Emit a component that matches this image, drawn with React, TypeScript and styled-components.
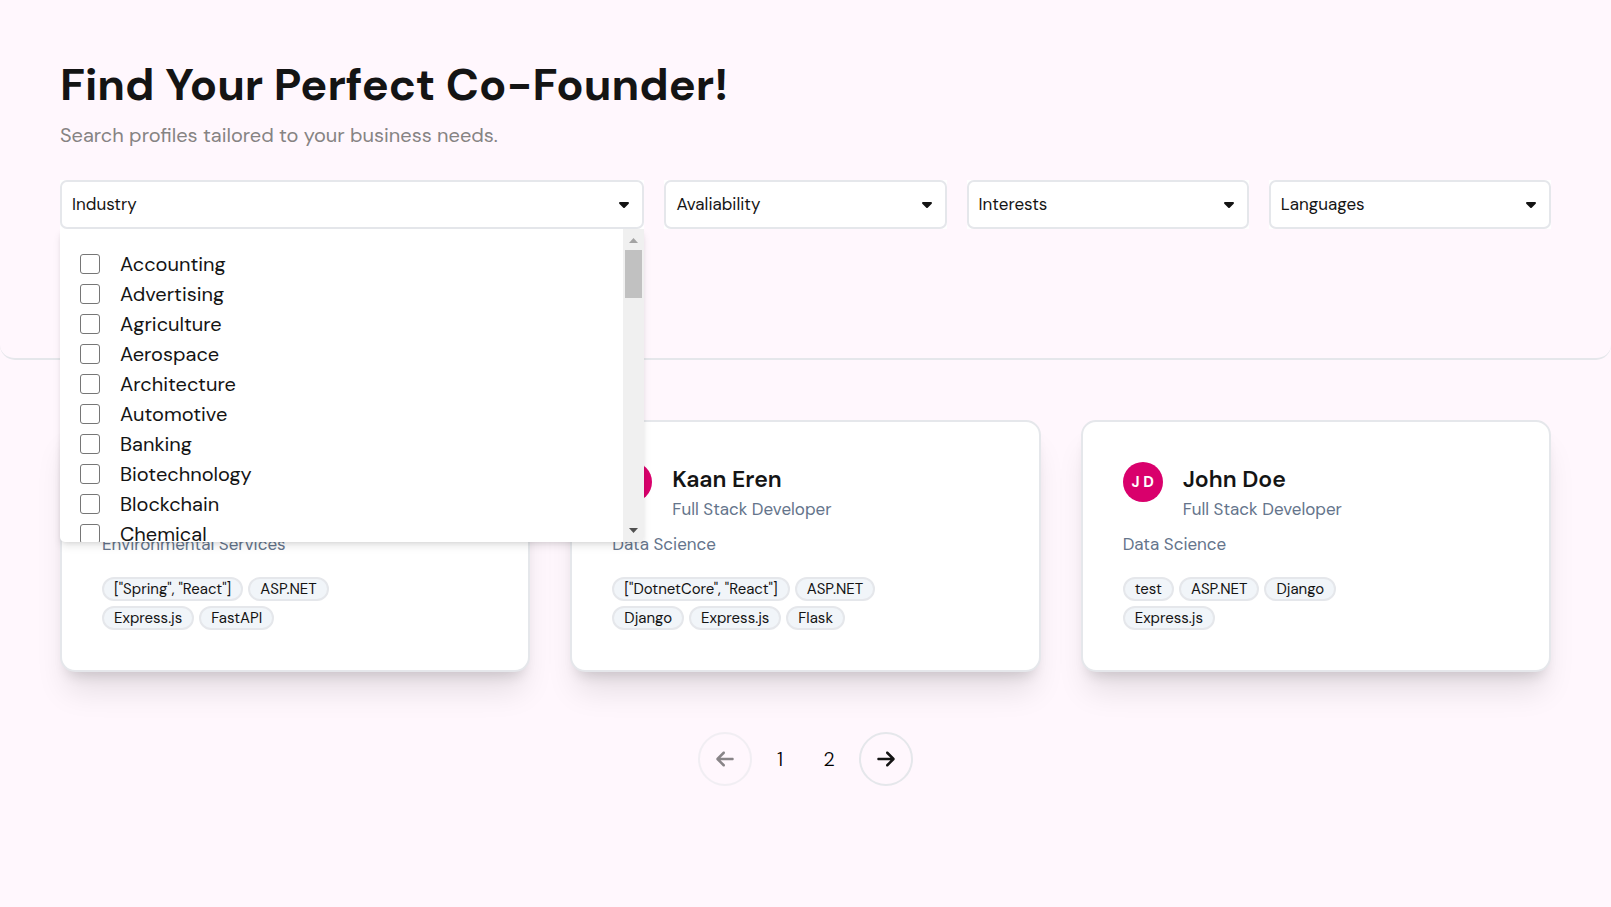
import React, { useState } from 'react';
import styled, { createGlobalStyle } from 'styled-components';
import { FaArrowLeft, FaArrowRight, FaCaretDown } from 'react-icons/fa6';

const GlobalStyle = createGlobalStyle`
  *, *::before, *::after { box-sizing: border-box; }
  body {
    margin: 0;
    background: #fff7fd;
    color: #141414;
    font-family: "DM Sans", Inter, "Liberation Sans", sans-serif;
    font-size: 20px;
    line-height: 30px;
  }
  h1, h2, p, ul { margin: 0; padding: 0; }
  ul { list-style: none; }
  button, select, input { font: inherit; color: inherit; margin: 0; }
`;

const Hero = styled.header`
  padding: 60px 60px 129px;
  border-bottom: 2px solid #e5e7eb;
  border-radius: 0 0 15px 15px;
`;

const Title = styled.h1`
  font-size: 45px;
  line-height: 50px;
  font-weight: 700;
`;

const Subtitle = styled.p`
  margin-top: 10px;
  color: #868383;
`;

const Filters = styled.form`
  display: grid;
  grid-template-columns: repeat(5, minmax(0, 1fr));
  gap: 20px;
  margin-top: 30px;
`;

const Filter = styled.div<{ $span?: number }>`
  position: relative;
  grid-column: span ${({ $span = 1 }) => $span};
  background: #fff;
`;

const fieldHeight = '49px';

const FilterButton = styled.button`
  display: flex;
  align-items: center;
  justify-content: space-between;
  width: 100%;
  height: ${fieldHeight};
  padding: 0 10px 2px;
  border: 2px solid #e5e7eb;
  border-radius: 7px;
  background: #fff;
  font-size: 17px;
  cursor: pointer;
`;

const FilterSelect = styled.select`
  display: block;
  appearance: none;
  width: 100%;
  height: ${fieldHeight};
  padding: 0 32px 2px 10px;
  border: 2px solid #e5e7eb;
  border-radius: 7px;
  background: #fff;
  font-size: 17px;
  cursor: pointer;
`;

const SelectCaret = styled.span`
  position: absolute;
  top: 0;
  bottom: 2px;
  right: 12px;
  display: flex;
  align-items: center;
  pointer-events: none;
`;

const Menu = styled.div`
  position: absolute;
  z-index: 10;
  top: 100%;
  left: 0;
  right: 0;
  display: flex;
  height: 313px;
  border-radius: 0 0 5px 5px;
  background: #fff;
  box-shadow: 0 5px 8px -1px rgb(0 0 0 / 10%), 0 2px 5px -2px rgb(0 0 0 / 10%);
  overflow: hidden;
`;

const OptionList = styled.ul`
  flex: 1;
  padding: 20px;
  overflow-y: auto;
  scrollbar-width: none;
`;

const Option = styled.label`
  display: flex;
  align-items: center;
  gap: 20px;
  height: 30px;
`;

const CheckBox = styled.input`
  width: 20px;
  height: 20px;
  appearance: none;
  border: 1px solid #767676;
  border-radius: 3px;
  background: #fff;
  &:checked { background: #d9006c; }
`;

const ScrollBar = styled.div`
  display: flex;
  flex-direction: column;
  align-items: center;
  justify-content: space-between;
  width: 21px;
  background: #f0f0f0;
`;

const ScrollArrow = styled.svg`
  width: 21px;
  height: 21px;
`;

const ScrollTrack = styled.div`
  flex: 1;
  width: 17px;
`;

const ScrollThumb = styled.div`
  height: 48px;
  background: #c1c1c1;
`;

const Results = styled.main`
  padding: 60px;
`;

const Cards = styled.div`
  display: grid;
  grid-template-columns: repeat(3, minmax(0, 1fr));
  gap: 40px;
`;

const Card = styled.article`
  padding: 40px;
  border: 2px solid #e5e7eb;
  border-radius: 15px;
  background: #fff;
  box-shadow: 0 25px 31px -6px rgb(0 0 0 / 10%), 0 10px 13px -7px rgb(0 0 0 / 14%);
`;

const Person = styled.div`
  display: flex;
  gap: 20px;
  min-height: 60px;
`;

const Avatar = styled.span`
  display: flex;
  align-items: center;
  justify-content: center;
  width: 40px;
  height: 40px;
  border-radius: 50%;
  background: #d9006c;
  color: #fff;
  font-size: 15px;
  font-weight: 700;
`;

const Name = styled.h2`
  font-size: 23px;
  line-height: 35px;
  font-weight: 600;
`;

const Muted = styled.p`
  color: #64748b;
  font-size: 17px;
  line-height: 25px;
`;

const Field = styled(Muted)`
  margin-top: 10px;
`;

const Tags = styled.ul`
  display: flex;
  flex-wrap: wrap;
  gap: 5px;
  width: 75%;
  margin-top: 20px;
`;

const Tag = styled.li`
  height: 24px;
  padding: 0 10px;
  border: 2px solid #e5e7eb;
  border-radius: 12px;
  background: #f1f5f9;
  font-size: 15px;
  line-height: 20px;
`;

const Pagination = styled.nav`
  display: flex;
  align-items: center;
  justify-content: center;
  gap: 9px;
  margin-top: 60px;
`;

const ArrowButton = styled.button`
  display: flex;
  align-items: center;
  justify-content: center;
  width: 54px;
  height: 54px;
  padding: 0;
  border: 2px solid #e5e7eb;
  border-radius: 50%;
  background: transparent;
  cursor: pointer;
  &:disabled { opacity: 0.5; cursor: default; }
`;

const PageButton = styled.button`
  width: 40px;
  height: 40px;
  padding: 0 2px 0 0;
  border: 0;
  background: transparent;
  color: #000;
  font-weight: 300;
  cursor: pointer;
`;

const industries = [
  'Accounting', 'Advertising', 'Agriculture', 'Aerospace', 'Architecture', 'Automotive', 'Banking',
  'Biotechnology', 'Blockchain', 'Chemical', 'Construction', 'Consulting', 'Data Science', 'Education',
  'Energy', 'Environmental Services', 'Fashion', 'Finance', 'Gaming', 'Healthcare', 'Insurance',
  'Logistics', 'Manufacturing', 'Marketing', 'Real Estate', 'Retail', 'Software', 'Telecommunications',
  'Tourism', 'Transportation',
];

const selects = ['Avaliability', 'Interests', 'Languages'];

type Profile = { id: number; name?: string; initials?: string; role?: string; field: string; tags: string[] };

const profiles: Profile[] = [
  { id: 1, field: 'Environmental Services', tags: ['["Spring", "React"]', 'ASP.NET', 'Express.js', 'FastAPI'] },
  {
    id: 2, name: 'Kaan Eren', initials: 'K E', role: 'Full Stack Developer', field: 'Data Science',
    tags: ['["DotnetCore", "React"]', 'ASP.NET', 'Django', 'Express.js', 'Flask'],
  },
  {
    id: 3, name: 'John Doe', initials: 'J D', role: 'Full Stack Developer', field: 'Data Science',
    tags: ['test', 'ASP.NET', 'Django', 'Express.js'],
  },
];

function IndustryFilter() {
  const [open, setOpen] = useState(true);
  return (
    <Filter $span={2}>
      <FilterButton type="button" aria-expanded={open} aria-controls="industry-menu" onClick={() => setOpen(!open)}>
        Industry
        <FaCaretDown size={16} aria-hidden />
      </FilterButton>
      {open && (
        <Menu id="industry-menu">
          <OptionList>
            {industries.map((name) => (
              <li key={name}>
                <Option>
                  <CheckBox type="checkbox" name="industry" value={name} />
                  {name}
                </Option>
              </li>
            ))}
          </OptionList>
          <ScrollBar aria-hidden>
            <ScrollArrow viewBox="0 0 21 21"><path d="M6 14h9l-4.500-5z" fill="#a3a3a3" /></ScrollArrow>
            <ScrollTrack><ScrollThumb /></ScrollTrack>
            <ScrollArrow viewBox="0 0 21 21"><path d="M6 7h9l-4.500 5z" fill="#505050" /></ScrollArrow>
          </ScrollBar>
        </Menu>
      )}
    </Filter>
  );
}

function ProfileCard({ profile }: { profile: Profile }) {
  return (
    <Card>
      <Person>
        {profile.initials && <Avatar>{profile.initials}</Avatar>}
        {profile.name && (
          <div>
            <Name>{profile.name}</Name>
            <Muted>{profile.role}</Muted>
          </div>
        )}
      </Person>
      <Field>{profile.field}</Field>
      <Tags>
        {profile.tags.map((tag) => <Tag key={tag}>{tag}</Tag>)}
      </Tags>
    </Card>
  );
}

export default function App() {
  return (
    <>
      <GlobalStyle />
      <Hero>
        <Title>Find Your Perfect Co-Founder!</Title>
        <Subtitle>Search profiles tailored to your business needs.</Subtitle>
        <Filters>
          <IndustryFilter />
          {selects.map((label) => (
            <Filter key={label}>
              <FilterSelect aria-label={label} defaultValue="">
                <option value="">{label}</option>
              </FilterSelect>
              <SelectCaret><FaCaretDown size={16} aria-hidden /></SelectCaret>
            </Filter>
          ))}
        </Filters>
      </Hero>
      <Results>
        <Cards>
          {profiles.map((profile) => <ProfileCard key={profile.id} profile={profile} />)}
        </Cards>
        <Pagination aria-label="Pages">
          <ArrowButton type="button" aria-label="Previous page" disabled><FaArrowLeft size={20} /></ArrowButton>
          <PageButton type="button">1</PageButton>
          <PageButton type="button">2</PageButton>
          <ArrowButton type="button" aria-label="Next page"><FaArrowRight size={20} /></ArrowButton>
        </Pagination>
      </Results>
    </>
  );
}
